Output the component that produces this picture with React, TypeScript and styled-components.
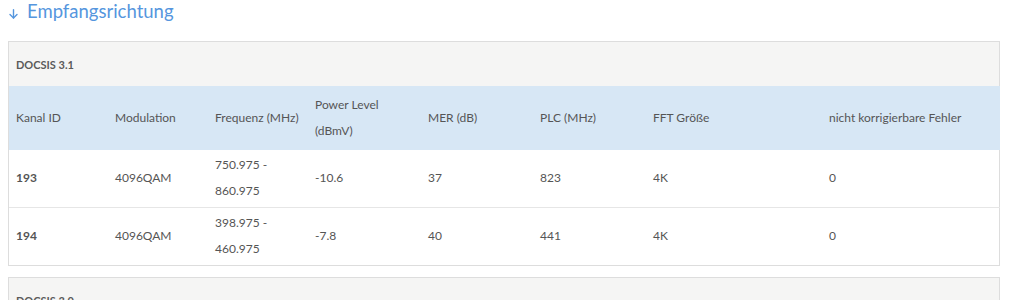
import React from 'react';
import styled, { createGlobalStyle } from 'styled-components';

const GlobalStyle = createGlobalStyle`
  body {
    margin: 0;
    background: #fff;
    font-family: Lato, "Open Sans", sans-serif;
    color: #555;
  }
`;

const Page = styled.div`
  padding: 0 13px 0 8px;
`;

const SectionTitle = styled.h2`
  margin: 0;
  height: 41px;
  display: flex;
  align-items: flex-start;
  font-size: 18.5px;
  font-weight: 400;
  color: #5596de;
  line-height: 23px;
`;

const ArrowIcon = styled.svg`
  width: 9px;
  height: 10px;
  margin: 9px 9px 0 1px;
  flex: none;
`;

const Panel = styled.div`
  border: 1px solid #ddd;
  margin-bottom: 11px;
`;

const PanelHeading = styled.div`
  background: #f5f5f4;
  height: 44px;
  padding: 0 7px;
  display: flex;
  align-items: center;
  font-size: 11px;
  font-weight: 700;
  color: #5a5a5a;
`;

const Table = styled.table`
  width: 100%;
  border-collapse: collapse;
  table-layout: fixed;
  font-size: 12px;
`;

const HeadCell = styled.th`
  background: #d7e7f5;
  text-align: left;
  font-weight: 400;
  color: #555;
  line-height: 26px;
  padding: 6px 7px;
  vertical-align: middle;
`;

const Row = styled.tr`
  border-top: 1px solid #e6e6e6;
  &:first-child {
    border-top: none;
  }
`;

const Cell = styled.td<{ $bold?: boolean }>`
  line-height: 26px;
  padding: 2px 7px 3px;
  vertical-align: middle;
  font-weight: ${p => (p.$bold ? 700 : 400)};
  color: #555;
`;

const widths = [99, 100, 100, 113, 112, 113, 176, 178];

const headers = [
  'Kanal ID',
  'Modulation',
  'Frequenz (MHz)',
  'Power Level (dBmV)',
  'MER (dB)',
  'PLC (MHz)',
  'FFT Größe',
  'nicht korrigierbare Fehler',
];

const rows = [
  ['193', '4096QAM', '750.975 - 860.975', '-10.6', '37', '823', '4K', '0'],
  ['194', '4096QAM', '398.975 - 460.975', '-7.8', '40', '441', '4K', '0'],
];

const App = () => (
  <>
    <GlobalStyle />
    <Page>
      <SectionTitle>
        <ArrowIcon viewBox="0 0 9 10" fill="none" stroke="currentColor" strokeWidth="1.4" strokeLinecap="round" strokeLinejoin="round">
          <path d="M4.5 0.8V9" />
          <path d="M1 5.6L4.5 9L8 5.6" />
        </ArrowIcon>
        Empfangsrichtung
      </SectionTitle>
      <Panel>
        <PanelHeading>DOCSIS 3.1</PanelHeading>
        <Table>
          <colgroup>
            {widths.map((w, i) => (
              <col key={i} style={{ width: w }} />
            ))}
          </colgroup>
          <thead>
            <tr>
              {headers.map(h => (
                <HeadCell key={h}>{h}</HeadCell>
              ))}
            </tr>
          </thead>
          <tbody>
            {rows.map(r => (
              <Row key={r[0]}>
                {r.map((c, i) => (
                  <Cell key={i} $bold={i === 0}>{c}</Cell>
                ))}
              </Row>
            ))}
          </tbody>
        </Table>
      </Panel>
      <Panel>
        <PanelHeading>DOCSIS 3.0</PanelHeading>
      </Panel>
    </Page>
  </>
);

export default App;
